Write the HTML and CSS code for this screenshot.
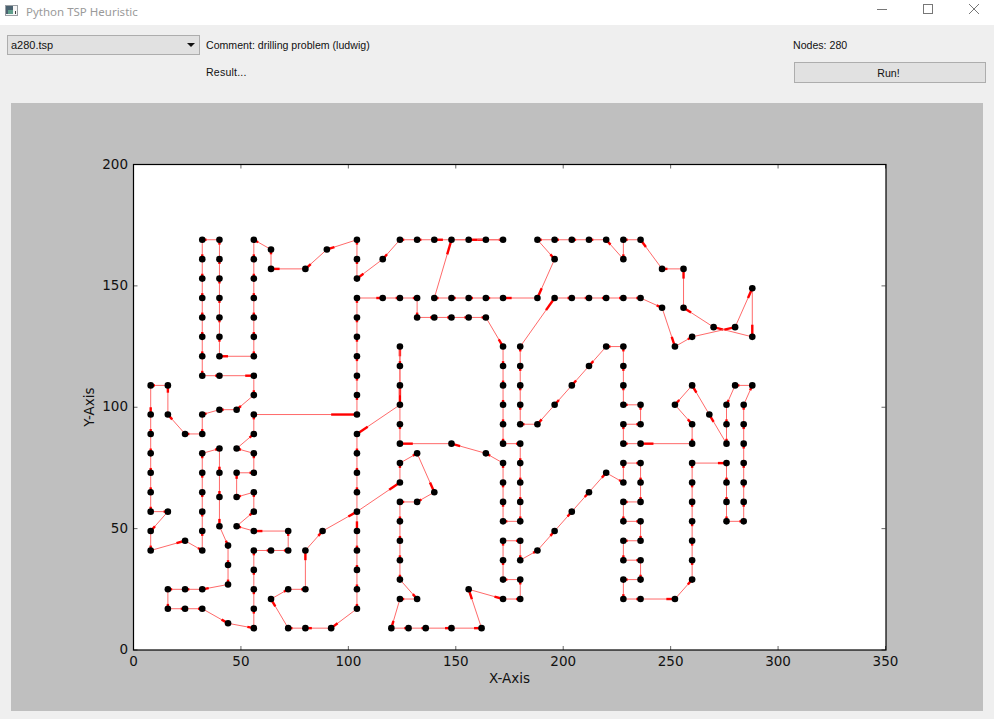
FILE: index.html
```html
<!DOCTYPE html>
<html lang="en">
<head>
  <meta charset="UTF-8">
  <title>Python TSP Heuristic</title>
  <link rel="stylesheet" href="styles.css">
</head>
<body>
  <div class="titlebar">
    <svg class="app-icon" width="13" height="11" viewBox="0 0 13 11">
      <rect x="0.5" y="0.5" width="12" height="10" fill="#f6f6f6" stroke="#9a9fa4"/>
      <rect x="1" y="1" width="7" height="8" fill="#4a6270"/>
      <rect x="3" y="5" width="5" height="4" fill="#5f9f8c"/>
      <rect x="10" y="6" width="1" height="3" fill="#444"/>
    </svg>
    <span class="title">Python TSP Heuristic</span>
    <div class="controls">
      <svg width="46" height="18" viewBox="0 0 46 18"><path d="M18 9.5h10" stroke="#777" fill="none"/></svg>
      <svg width="46" height="18" viewBox="0 0 46 18"><rect x="18.5" y="4.5" width="9" height="9" stroke="#777" fill="none"/></svg>
      <svg width="46" height="18" viewBox="0 0 46 18"><path d="M18 4l10 10M28 4l-10 10" stroke="#777" fill="none"/></svg>
    </div>
  </div>

  <div class="toolbar">
    <div class="select">a280.tsp<span class="caret"></span></div>
    <div class="label">Comment: drilling problem (ludwig)</div>
    <div class="label nodes">Nodes: 280</div>
    <div class="label result">Result...</div>
    <button class="run">Run!</button>
  </div>

  <div class="panel">
    <svg class="chart" id="chart" width="972" height="608" viewBox="11 103 972 608">
      <rect class="plot-bg" x="133.5" y="164.5" width="752.5" height="485.5"/>
      <g id="tour"></g>
      <g id="axes" class="ticks"></g>
      <rect class="frame" x="133.5" y="164.5" width="752.5" height="485.5"/>
      <text class="axis-label" x="509.5" y="683" text-anchor="middle">X-Axis</text>
      <text class="axis-label" x="93.5" y="407" text-anchor="middle" transform="rotate(-90 93.5 407)">Y-Axis</text>
    </svg>
  </div>

  <script src="script.js"></script>
</body>
</html>
```

FILE: styles.css
```css
body {
  margin: 0;
  width: 994px;
  height: 719px;
  overflow: hidden;
  background: #efefef;
  font-family: "Liberation Sans", "Noto Sans", sans-serif;
}

.titlebar {
  display: flex;
  align-items: center;
  height: 25px;
  padding-left: 5px;
  background: #fff;
  box-sizing: border-box;
}

.app-icon {
  margin-right: 8px;
  margin-bottom: 4px;
}

.title {
  font-family: "Noto Sans", sans-serif;
  font-size: 11.5px;
  color: #9a9a9a;
  margin-bottom: 2px;
}

.controls {
  display: flex;
  align-self: flex-start;
  margin-left: auto;
  margin-right: -3px;
}

.toolbar {
  display: grid;
  grid-template-columns: 193px 582px 192px;
  grid-template-rows: 20px 21px;
  column-gap: 6px;
  row-gap: 7px;
  padding: 10px 8px 0 7px;
  height: 78px;
  box-sizing: border-box;
  font-size: 10.6px;
  color: #111;
}

.select {
  display: flex;
  align-items: center;
  justify-content: space-between;
  padding: 0 4px 0 3px;
  background: #e1e1e1;
  border: 1px solid #adadad;
  box-sizing: border-box;
  font-size: 11px;
}

.caret {
  width: 0;
  height: 0;
  border-left: 4px solid transparent;
  border-right: 4px solid transparent;
  border-top: 4px solid #111;
}

.label {
  line-height: 20px;
}

.nodes {
  margin-left: -1px;
}

.result {
  grid-column: 2;
  letter-spacing: 0.2px;
}

.run {
  margin: 0;
  padding: 0 3px 0 0;
  background: #e1e1e1;
  border: 1px solid #adadad;
  font: inherit;
  color: #111;
}

.panel {
  margin: 0 11px;
  height: 608px;
  background: #bfbfbf;
}

.chart {
  display: block;
}

.plot-bg {
  fill: #fff;
}

.frame {
  fill: none;
  stroke: #000;
  stroke-width: 1.2;
}

.edge {
  stroke: #ff6a6a;
  stroke-width: 1;
  fill: none;
}

.head {
  stroke: #f00;
  stroke-width: 2.4;
  fill: none;
}

.dot {
  fill: #000;
}

.ticks line {
  stroke: #000;
  stroke-width: 0.6;
}

.ticks text,
.axis-label {
  font-family: "DejaVu Sans", sans-serif;
  font-size: 13.5px;
  fill: #111;
}
```

FILE: script.js
```js
var tour = "288,149 288,129 270,133 256,141 256,157 246,157 236,169 228,169 228,161 220,169 212,169 204,169 196,169 188,169 196,161 188,145 172,145 164,145 156,145 148,145 140,145 148,169 164,169 172,169 156,169 140,169 132,169 124,169 116,161 104,153 104,161 104,169 90,165 80,157 64,157 64,165 56,169 56,161 56,153 56,145 56,137 56,129 56,121 40,121 40,129 40,137 40,145 40,153 40,161 40,169 32,169 32,161 32,153 32,145 32,137 32,129 32,121 32,113 40,113 56,113 56,105 48,99 40,99 32,97 32,89 24,89 16,97 16,109 8,109 8,97 8,89 8,81 8,73 8,65 8,57 16,57 8,49 8,41 24,45 32,41 32,49 32,57 32,65 32,73 32,81 40,83 40,73 40,63 40,51 44,43 44,35 44,27 32,25 24,25 16,25 16,17 24,17 32,17 44,11 56,9 56,17 56,25 56,33 56,41 64,41 72,41 72,49 56,49 48,51 56,57 56,65 48,63 48,73 56,73 56,81 48,83 56,89 56,97 104,97 104,105 104,113 104,121 104,129 104,137 104,145 116,145 124,145 132,145 132,137 140,137 148,137 156,137 164,137 172,125 172,117 172,109 172,101 172,93 172,85 180,85 180,77 180,69 180,61 180,53 172,53 172,61 172,69 172,77 164,81 148,85 124,85 124,93 124,109 124,125 124,117 124,101 104,89 104,81 104,73 104,65 104,49 104,41 104,33 104,25 104,17 92,9 80,9 72,9 64,21 72,25 80,25 80,41 88,49 104,57 124,69 124,77 132,81 140,65 132,61 124,61 124,53 124,45 124,37 124,29 132,21 124,21 120,9 128,9 136,9 148,9 162,9 156,25 172,21 180,21 180,29 172,29 172,37 172,45 180,45 180,37 188,41 196,49 204,57 212,65 220,73 228,69 228,77 236,77 236,69 236,61 228,61 228,53 236,53 236,45 228,45 228,37 236,37 236,29 228,29 228,21 236,21 252,21 260,29 260,37 260,45 260,53 260,61 260,69 260,77 276,77 276,69 276,61 276,53 284,53 284,61 284,69 284,77 284,85 284,93 284,101 288,109 280,109 276,101 276,93 276,85 268,97 260,109 252,101 260,93 260,85 236,85 228,85 228,93 236,93 236,101 228,101 228,109 228,117 228,125 220,125 212,117 204,109 196,101 188,93 180,93 180,101 180,109 180,117 180,125 196,145 204,145 212,145 220,145 228,145 236,145 246,141 252,125 260,129 280,133";

var NS = "http://www.w3.org/2000/svg";
var X0 = 133.5, Y0 = 650, SX = 752 / 350, SY = 485.5 / 200;

function px(x) { return X0 + x * SX; }
function py(y) { return Y0 - y * SY; }

function add(parent, name, attrs, text) {
  var el = document.createElementNS(NS, name);
  for (var k in attrs) el.setAttribute(k, attrs[k]);
  if (text !== undefined) el.textContent = text;
  parent.appendChild(el);
  return el;
}

var points = tour.split(" ").map(function (p) {
  var a = p.split(",");
  return [px(+a[0]), py(+a[1])];
});

var group = document.getElementById("tour");

points.forEach(function (p, i) {
  var q = points[(i + 1) % points.length];
  add(group, "line", { class: "edge", x1: p[0], y1: p[1], x2: q[0], y2: q[1] });
  // arrow head: last quarter of the edge
  var hx = q[0] + (p[0] - q[0]) * 0.25;
  var hy = q[1] + (p[1] - q[1]) * 0.25;
  add(group, "line", { class: "head", x1: hx, y1: hy, x2: q[0], y2: q[1] });
});

points.forEach(function (p) {
  add(group, "circle", { class: "dot", cx: p[0], cy: p[1], r: 3.3 });
});

var axes = document.getElementById("axes");

for (var x = 0; x <= 350; x += 50) {
  add(axes, "line", { x1: px(x), y1: 650, x2: px(x), y2: 646 });
  add(axes, "line", { x1: px(x), y1: 164.5, x2: px(x), y2: 168.5 });
  add(axes, "text", { x: px(x), y: 666, "text-anchor": "middle" }, x);
}

for (var y = 0; y <= 200; y += 50) {
  add(axes, "line", { x1: 133.5, y1: py(y), x2: 137.5, y2: py(y) });
  add(axes, "line", { x1: 885.5, y1: py(y), x2: 881.5, y2: py(y) });
  add(axes, "text", { x: 128, y: py(y) + 4, "text-anchor": "end" }, y);
}
```
